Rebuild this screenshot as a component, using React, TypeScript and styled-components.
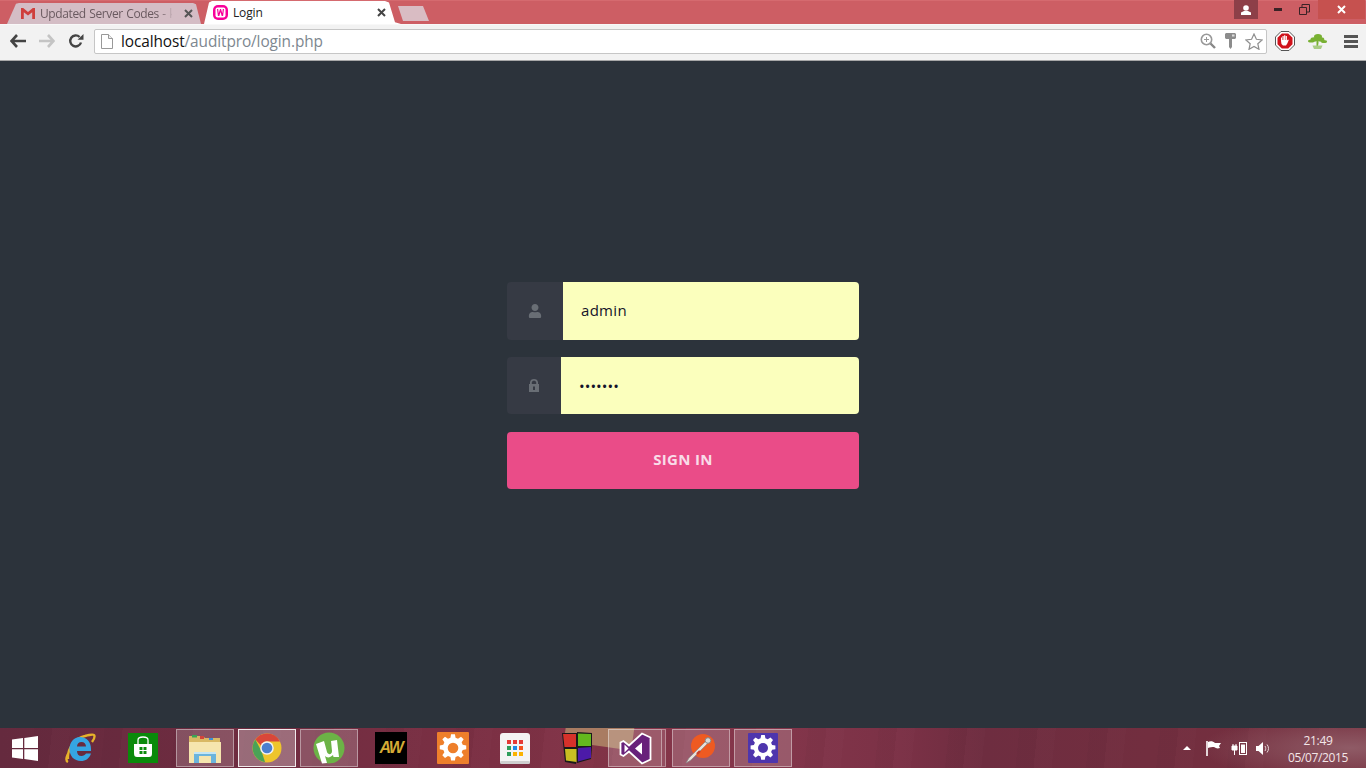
import React from "react";
import styled, { createGlobalStyle } from "styled-components";
import { FaUser } from "react-icons/fa";

const Global = createGlobalStyle`
  html, body { margin: 0; padding: 0; height: 100%; overflow: hidden; }
  body { font-family: "Open Sans", "Liberation Sans", sans-serif; background: #2c333b; }
  #root { height: 100%; }
`;

const Screen = styled.div`
  width: 1366px; height: 768px; display: flex; flex-direction: column; overflow: hidden;
`;

/* ---------- browser chrome ---------- */
const TabStrip = styled.div`
  height: 24px; flex: none; background: #cd5e64; display: flex; align-items: flex-end;
  padding-left: 7px; position: relative; box-sizing: border-box;
  box-shadow: inset 0 1px 0 #d56a6f;
`;
const Tab = styled.div<{ $active?: boolean }>`
  height: ${p => (p.$active ? 23 : 21)}px;
  width: ${p => (p.$active ? 201 : 194)}px;
  margin-left: ${p => (p.$active ? -1 : 0)}px;
  flex: none; box-sizing: border-box;
  padding: 0 ${p => (p.$active ? 15 : 8)}px 0 ${p => (p.$active ? 13 : 14)}px;
  background: ${p => (p.$active ? "#ffffff" : "#d4bdc5")};
  clip-path: ${p => p.$active
    ? "polygon(0 100%, 4px 100%, 9px 6%, 12px 0, 185px 0, 189px 6%, 195px 92%, 201px 100%)"
    : "polygon(0 100%, 9px 4%, 12px 0, 186px 0, 189px 6%, 194px 100%)"};
  display: flex; align-items: center; gap: 5px; font-size: 12px;
  letter-spacing: ${p => (p.$active ? -0.15 : -0.38)}px;
  word-spacing: ${p => (p.$active ? 0 : 0.7)}px;
  color: ${p => (p.$active ? "#222" : "#6a5a60")};
`;
const TabTitle = styled.span<{ $fade?: boolean }>`
  flex: 1; overflow: hidden; white-space: nowrap;
  ${p => p.$fade ? "mask-image: linear-gradient(90deg, #000 90%, rgba(0,0,0,.15));" : ""}
`;
const TabClose = styled.span`
  display: flex; flex: none; margin-left: 7px;
`;
const NewTab = styled.div`
  width: 32px; height: 15px; margin: 0 0 3px -3px; flex: none; background: #d9bcc3;
  clip-path: polygon(0 0, 25px 0, 31px 100%, 5px 100%);
`;
const WindowControls = styled.div`
  position: absolute; top: 0; right: 1px; height: 19px; display: flex;
`;
const Ctl = styled.div<{ $w: number; $bg?: string; $skip?: number }>`
  width: ${p => p.$w}px; height: 19px; background: ${p => p.$bg || "transparent"};
  margin-left: ${p => p.$skip || 0}px;
  display: flex; align-items: center; justify-content: center;
`;

const Toolbar = styled.div`
  height: 37px; flex: none; display: flex; align-items: center; box-sizing: border-box;
  padding: 0 0 2px 3px; background: #f2f2f2; border-bottom: 1px solid #a8a8a8;
  box-shadow: inset 0 1px 0 #f8f8f8;
`;
const NavSlot = styled.div`
  width: 29px; height: 24px; display: flex; align-items: center; justify-content: center; flex: none;
`;
const UrlBox = styled.div`
  flex: 1; height: 25px; margin-left: 4px; box-sizing: border-box; background: #fff;
  border: 1px solid #c6c6c6; border-radius: 2px; display: flex; align-items: center;
  padding: 0 3px 0 6px;
`;
const Url = styled.div`
  flex: 1; margin-left: 8px; font-size: 15.4px; color: #7d8790; letter-spacing: -0.1px; white-space: nowrap;
`;
const Host = styled.span` color: #111; `;
const UrlIcons = styled.div` display: flex; align-items: center; gap: 9px; `;
const Extensions = styled.div`
  width: 99px; flex: none; display: flex; align-items: center; padding-left: 8px; box-sizing: border-box;
`;
const ExtSlot = styled.div<{ $w: number }>`
  width: ${p => p.$w}px; flex: none; display: flex; align-items: center; justify-content: center;
`;

/* ---------- page ---------- */
const Page = styled.main`
  flex: 1; background: #2c333b; display: flex; flex-direction: column; align-items: center;
  padding-top: 221px; box-sizing: border-box;
`;
const Form = styled.form`
  width: 352px; display: flex; flex-direction: column;
`;
const Field = styled.div<{ $h: number; $gap: number }>`
  height: ${p => p.$h}px; margin-bottom: ${p => p.$gap}px; display: flex; border-radius: 4px; overflow: hidden;
`;
const Addon = styled.div<{ $w: number }>`
  width: ${p => p.$w}px; flex: none; background: #363a44; color: #696e75; font-size: 14px;
  display: flex; align-items: center; justify-content: center;
`;
const Input = styled.input<{ $spacing: number; $lift?: number }>`
  flex: 1; min-width: 0; border: 0; outline: 0; background: #fbffbd;
  padding: 0 18px ${p => p.$lift || 0}px; margin: 0;
  font-family: "Open Sans", sans-serif; font-size: 15px; letter-spacing: ${p => p.$spacing}px; color: #14142a;
`;
const Submit = styled.button`
  height: 57px; border: 0; border-radius: 4px; background: #ea4c88; color: #f9dce8;
  font-family: "Open Sans", sans-serif; font-weight: 700; font-size: 15px; letter-spacing: 0.3px; padding: 0 0 4px;
`;

/* ---------- taskbar ---------- */
const Taskbar = styled.footer`
  height: 40px; flex: none; position: relative; display: flex; align-items: center; overflow: hidden;
  background:
    radial-gradient(150px 34px at 1350px 20px, #8f5b66 0%, rgba(143,91,102,0) 100%),
    repeating-linear-gradient(96deg, rgba(255,255,255,0) 0 34px, rgba(0,0,0,.025) 34px 52px, rgba(255,255,255,.012) 52px 70px),
    linear-gradient(90deg, #652a3e 0%, #6f2c40 18%, #7c3044 36%, #87364a 48%, #82354a 58%, #7b3146 66%, #6e2d40 72%, #722e3f 84%, #76303f 100%);
  &::before {
    content: ""; position: absolute; left: 566px; top: -18px; width: 68px; height: 36px;
    background: #a97c62; transform: rotate(8deg);
  }
`;
const StartSlot = styled.div`
  width: 50px; height: 40px; flex: none; display: flex; align-items: center; justify-content: center;
`;
const Slot = styled.div<{ $state?: "open" | "active" | "stack"; $first?: boolean }>`
  width: 58px; height: 38px; margin: 0 2px; flex: none; box-sizing: border-box;
  display: flex; align-items: center; justify-content: center; position: relative;
  ${p => p.$first && "margin-left: 1px; margin-right: 3px;"}
  ${p => p.$state === "open" && "background: rgba(255,255,255,.18); border: 1px solid rgba(255,255,255,.4);"}
  ${p => p.$state === "active" && "background: rgba(255,255,255,.3); border: 1px solid rgba(255,255,255,.85);"}
  ${p => p.$state === "stack" && "background: rgba(255,255,255,.18); border: 1px solid rgba(255,255,255,.4); width: 54px; margin: 0 8px 0 0; &::after { content: ''; position: absolute; left: 53px; top: -1px; bottom: -1px; width: 4px; box-sizing: border-box; background: rgba(255,255,255,.12); border: 1px solid rgba(255,255,255,.35); border-left: 0; }"}
`;
const Tray = styled.div`
  position: absolute; right: 0; top: 0; height: 40px; display: flex; align-items: center; color: #fff;
`;
const TrayIcons = styled.div`
  display: flex; align-items: center; gap: 9px;
`;
const TrayArrow = styled.span`
  display: flex; margin-right: 6px;
`;
const Clock = styled.div`
  width: 96px; text-align: center; font-size: 12px; line-height: 17px; color: #f3e6e8;
  letter-spacing: -0.35px; padding-top: 2px; box-sizing: border-box;
`;

/* ---------- icons ---------- */
const Gmail = () => (
  <svg width="14" height="11" viewBox="0 0 14 11">
    <path d="M0 0h2.200L7 4 11.800 0H14v11h-2.800V4.200L7 7.600 2.800 4.200V11H0z" fill="#cf3f3c" />
  </svg>
);
const Wamp = () => (
  <svg width="15" height="15" viewBox="0 0 15 15">
    <rect width="15" height="15" rx="5" fill="#f8009a" />
    <rect x="2.500" y="2.500" width="10" height="10" rx="2" fill="#fff" />
    <path d="M4 4l.9 7h1.400L7.500 7l1.200 4h1.400L11 4H9.800l-.5 4.200L8 4H7L5.700 8.200 5.200 4z" fill="#f8009a" />
  </svg>
);
const Close = ({ c = "#555" }: { c?: string }) => (
  <svg width="9" height="9" viewBox="0 0 9 9">
    <path d="M1 1l7 7M8 1L1 8" stroke={c} strokeWidth="2" />
  </svg>
);
const Back = () => (
  <svg width="16" height="14" viewBox="0 0 16 14">
    <path d="M7 1L1.500 7 7 13M2 7h14" fill="none" stroke="#444" strokeWidth="2.600" />
  </svg>
);
const Forward = () => (
  <svg width="16" height="14" viewBox="0 0 16 14">
    <path d="M9 1l5.500 6L9 13M14 7H0" fill="none" stroke="#c4c4c4" strokeWidth="2.600" />
  </svg>
);
const Reload = () => (
  <svg width="16" height="16" viewBox="0 0 16 16">
    <path d="M13 9.500A5.500 5.500 0 1 1 11.600 4" fill="none" stroke="#444" strokeWidth="2.400" />
    <path d="M9.500 6.800H15.500V1z" fill="#444" />
  </svg>
);
const PageIcon = () => (
  <svg width="12" height="15" viewBox="0 0 12 15">
    <path d="M.5.500h7l4 4v10H.500z" fill="#fff" stroke="#999" />
    <path d="M7.500.500v4h4" fill="#eee" stroke="#999" />
  </svg>
);
const ZoomIcon = () => (
  <svg width="16" height="16" viewBox="0 0 16 16">
    <circle cx="6.500" cy="6.500" r="5.200" fill="none" stroke="#999" strokeWidth="1.600" />
    <path d="M10.500 10.500L15 15" stroke="#888" strokeWidth="2.400" />
    <path d="M4 6.500h5M6.500 4v5" stroke="#999" />
  </svg>
);
const Key = () => (
  <svg width="11" height="16" viewBox="0 0 11 16">
    <path d="M1 0h9l1 1v4l-1 1H7v8l-1.500 2L4 14V6H1L0 5V1z" fill="#8c8c8c" />
    <rect x="7" y="1.500" width="2.500" height="2" fill="#ddd" />
  </svg>
);
const Star = () => (
  <svg width="18" height="17" viewBox="0 0 18 17">
    <path d="M9 1l2.400 5.300 5.700.6-4.300 3.800 1.200 5.600L9 13.400 4 16.300l1.200-5.600L.9 6.900l5.700-.6z" fill="#fff" stroke="#8f8f8f" strokeWidth="1.200" />
  </svg>
);
const Stop = () => (
  <svg width="20" height="20" viewBox="0 0 20 20">
    <path d="M6 .5h8L19.500 6v8L14 19.500H6L.5 14V6z" fill="#fff" stroke="#555" />
    <path d="M6.800 2.500h6.400L17.500 6.800v6.400l-4.300 4.300H6.800l-4.300-4.300V6.800z" fill="#d0121b" />
    <path d="M6 10V6.500h1V9h.5V5h1.200v4h.4V4.300h1.200V9h.4V5h1.200v4.500l1.100-1 .8.600-1.500 3.500-1.300 2H8L6.500 13z" fill="#fff" />
  </svg>
);
const Bonsai = () => (
  <svg width="19" height="15" viewBox="0 0 19 15">
    <ellipse cx="10" cy="2.800" rx="4" ry="2.800" fill="#78b032" />
    <ellipse cx="6" cy="5.500" rx="3.500" ry="2.200" fill="#78b032" />
    <ellipse cx="3.200" cy="7" rx="3.200" ry="1.600" fill="#78b032" />
    <ellipse cx="13" cy="5.500" rx="3.300" ry="2.200" fill="#78b032" />
    <ellipse cx="16" cy="7.600" rx="3" ry="1.500" fill="#78b032" />
    <path d="M8.500 5h2v4l-.5 3H8.500z" fill="#78b032" />
    <path d="M4.500 11.500h10L13 15H6z" fill="#a9cc84" />
  </svg>
);
const Burger = () => (
  <svg width="14" height="13" viewBox="0 0 14 13">
    <path d="M0 0h14v3H0zM0 5h14v3H0zM0 10h14v3H0z" fill="#555" />
  </svg>
);
const Avatar = () => (
  <svg width="12" height="10" viewBox="0 0 12 10">
    <circle cx="6" cy="3" r="2.800" fill="#fff" />
    <path d="M1 7.500l3-1.500h4l3 1.500V10H1z" fill="#fff" />
  </svg>
);
const Min = () => <svg width="9" height="3" viewBox="0 0 9 3"><rect width="8" height="3" fill="#3a2226" /></svg>;
const Restore = () => (
  <svg width="11" height="11" viewBox="0 0 11 11">
    <path d="M.5 3.500h7v7h-7zM3 3V.500h7.500V8H8" fill="none" stroke="#3a2226" />
  </svg>
);
const Lock = () => (
  <svg width="10" height="13" viewBox="0 0 10 13">
    <path d="M0 5h1V3.500C1 1 3 0 5 0s4 1 4 3.500V5h1v8H0zM2.800 5h4.400V3.500C7.200 2.300 6 1.800 5 1.800S2.800 2.300 2.800 3.500z" fill="#696e75" fillRule="evenodd" />
    <rect x="4" y="7.500" width="2" height="3.500" fill="#363a44" />
  </svg>
);
const Windows = () => (
  <svg width="26" height="25" viewBox="0 0 26 25">
    <path d="M0 3.600l11-1.500v9.900H0zM12.300 1.900L26 0v12H12.300zM0 13.200h11v9.700L0 21.400zM12.300 13.200H26V25l-13.700-1.900z" fill="#fff" />
  </svg>
);
const IE = () => (
  <svg width="32" height="32" viewBox="0 0 32 32">
    <path d="M4 27C3 17 11 6 21 4c5-1.500 8-2 9-1 1.500 2-.5 5-2 7" fill="none" stroke="#e6b22a" strokeWidth="2.400" />
    <path d="M4 30c-2-1-2-4 0-8" fill="none" stroke="#e6b22a" strokeWidth="2.400" />
    <path d="M16 5c7 0 11 5 11 12v2H13c0 3 1.500 5 4.500 5 2 0 3.500-1 4.500-2.500h5C25.500 26.500 21.500 29 17 29 10 29 5.500 24 5.500 17S10 5 16 5zm-3 9.500h9c0-2.500-1.800-4.500-4.500-4.500S13 12 13 14.500z" fill="#35a5e3" />
  </svg>
);
const Store = () => (
  <svg width="30" height="30" viewBox="0 0 30 30">
    <rect width="30" height="30" fill="#0a8a0a" />
    <path d="M6 11h18v9c0 3-1 4-3 4H9c-2 0-3-1-3-4z" fill="#fff" />
    <path d="M10 11V7c0-4 10-4 10 0v4" fill="none" stroke="#fff" strokeWidth="1.300" />
    <path d="M11.500 14h3v3h-3zM15.500 14h3v3h-3zM11.500 18h3v3h-3zM15.500 18h3v3h-3z" fill="#0a8a0a" />
  </svg>
);
const Explorer = () => (
  <svg width="32" height="29" viewBox="0 0 32 29">
    <path d="M0 2h14l2 2h15v23H0z" fill="#d9b864" />
    <rect x="3" y="1" width="5" height="2.500" fill="#3aa655" />
    <rect x="11" y="2" width="4" height="3" fill="#d4453a" />
    <rect x="20" y="4" width="4" height="2" fill="#3a8fd4" />
    <path d="M0 8h32v21H0z" fill="#f6e5ae" />
    <path d="M5 29V18h22v11h-5v-7H10v7z" fill="#6cb4dc" />
    <path d="M5 18h22v2H5z" fill="#c4e6f5" />
  </svg>
);
const Chrome = () => (
  <svg width="30" height="30" viewBox="0 0 30 30">
    <circle cx="15" cy="15" r="14.500" fill="#eec52c" />
    <path d="M15 .5A14.500 14.500 0 0 1 28 8.500H15a6.500 6.500 0 0 0-6 4L3.300 6.500A14.500 14.500 0 0 1 15 .5z" fill="#d9473a" />
    <path d="M3.300 6.500L9.600 18.500l3.500 10.800A14.500 14.500 0 0 1 3.300 6.500z" fill="#4aa257" />
    <circle cx="15" cy="15" r="6.800" fill="#f2f2f2" />
    <circle cx="15" cy="15" r="5.300" fill="#4a7fd0" />
  </svg>
);
const UTorrent = () => (
  <svg width="32" height="32" viewBox="0 0 32 32">
    <circle cx="16" cy="16" r="15.500" fill="#6cb346" />
    <path d="M3 12l8-3 3 11c1 3 5 3 5-1l-1-10 6-1 2 17h-5.500l-.5-2c-3 3-6 3-8 1l2 7-5 .5z" fill="#fff" />
  </svg>
);
const AWIcon = () => (
  <svg width="32" height="32" viewBox="0 0 32 32">
    <rect width="32" height="32" fill="#000" />
    <text x="16" y="21" textAnchor="middle" fontFamily="Liberation Sans, sans-serif" fontWeight="700" fontStyle="italic" fontSize="16" letterSpacing="-1.500" fill="#d4ab35">AW</text>
  </svg>
);
const gearPath = "M13.200 2h3.600l.6 3.300 2.300 1 2.800-1.900 2.500 2.500-1.900 2.800 1 2.300 3.300.6v3.600l-3.300.6-1 2.300 1.900 2.800-2.500 2.500-2.800-1.900-2.300 1-.6 3.300h-3.600l-.6-3.300-2.300-1-2.800 1.900-2.500-2.500 1.900-2.800-1-2.300-3.300-.6v-3.600l3.300-.6 1-2.300-1.900-2.800 2.500-2.500 2.800 1.900 2.300-1z";
const Gear = ({ bg, size }: { bg: string; size: number }) => (
  <svg width={size} height={size} viewBox="0 0 30 30">
    <rect width="30" height="30" rx="1" fill={bg} />
    <path d={gearPath} fill="#fff" />
    <circle cx="15" cy="15" r="5" fill={bg} />
  </svg>
);
const Apps = () => {
  const c = ["#e53935", "#e53935", "#e53935", "#2e9e5b", "#1e88e5", "#f4511e", "#2e9e5b", "#fbb300", "#fbb300"];
  return (
    <svg width="30" height="31" viewBox="0 0 30 31">
      <rect width="30" height="31" rx="3" fill="#f4f4f4" />
      <rect y="28" width="30" height="3" rx="1.500" fill="#cfcfcf" />
      {c.map((f, i) => (
        <rect key={i} x={7 + (i % 3) * 6} y={7 + Math.floor(i / 3) * 6} width="4" height="4" fill={f} />
      ))}
    </svg>
  );
};
const Cube = () => (
  <svg width="31" height="32" viewBox="0 0 31 32">
    <path d="M0 1l15 0 1 15-2 16-11-2z" fill="#1a1a1a" />
    <path d="M15 0l15 1v14l-1 12-14 4z" fill="#1a1a1a" />
    <path d="M1 2h13v13H2.500z" fill="#d6312a" />
    <path d="M16 1.500l13 .5v12H16z" fill="#64b81e" />
    <path d="M3 17h11.500v13l-10.500-1.500z" fill="#c9be22" />
    <path d="M16 16l13-1v11l-13 3.500z" fill="#4c1aa8" />
  </svg>
);
const VS = () => (
  <svg width="33" height="33" viewBox="0 0 33 33">
    <path d="M23 1.500l8.500 4v22l-8.500 4-13-12-5.500 4.500-3-1.500V10.500l3-1.500 5.500 4.500z" fill="#68217a" stroke="#fff" strokeWidth="1.800" />
    <path d="M23 10.500l-7 6 7 6zM5.500 12.500v8l4-4z" fill="#fff" />
  </svg>
);
const Pen = () => (
  <svg width="32" height="32" viewBox="0 0 32 32">
    <circle cx="18" cy="14" r="12" fill="#ee5a22" />
    <path d="M1 31l5-3L24 10l-2-2L4 26z" fill="#e8e0da" stroke="#8a8a8a" strokeWidth=".7" />
    <path d="M12 22l3-3" stroke="#c8402a" strokeWidth="2.400" />
    <circle cx="23" cy="8.500" r="2.800" fill="#d8d8d8" stroke="#888" />
  </svg>
);
const TrayUp = () => <svg width="8" height="4" viewBox="0 0 8 4"><path d="M4 0l4 4H0z" fill="#fff" /></svg>;
const Flag = () => (
  <svg width="16" height="15" viewBox="0 0 16 15">
    <path d="M1 0v15" stroke="#fff" strokeWidth="1.600" />
    <path d="M2 1c2-1 5-1 7 1l6 0-2 3 1 2c-3 1-4 0-6-1-2 0-4 0-6 1z" fill="#fff" />
  </svg>
);
const Battery = () => (
  <svg width="16" height="14" viewBox="0 0 16 14">
    <path d="M1 5h5v4H1zM2 3v2M5 3v2M3.500 9v5" stroke="#fff" fill="#fff" />
    <rect x="8.500" y="1.500" width="7" height="12" fill="none" stroke="#fff" />
    <rect x="10" y="3.500" width="4" height="8.500" fill="#fff" />
  </svg>
);
const Speaker = () => (
  <svg width="14" height="13" viewBox="0 0 14 13">
    <path d="M0 4h2.500L7 0v13L2.500 9H0z" fill="#fff" />
    <path d="M9 4c1 1.500 1 3.500 0 5M11 2.500c2 2.500 2 5.500 0 8" fill="none" stroke="#e8d8da" />
  </svg>
);

export default function App() {
  return (
    <Screen>
      <Global />
      <TabStrip>
        <Tab>
          <Gmail />
          <TabTitle $fade>Updated Server Codes - k</TabTitle>
          <TabClose><Close /></TabClose>
        </Tab>
        <Tab $active>
          <Wamp />
          <TabTitle>Login</TabTitle>
          <TabClose><Close c="#444" /></TabClose>
        </Tab>
        <NewTab />
        <WindowControls>
          <Ctl $w={24} $bg="#8d3f48"><Avatar /></Ctl>
          <Ctl $w={24} $skip={8}><Min /></Ctl>
          <Ctl $w={28}><Restore /></Ctl>
          <Ctl $w={47} $bg="#c6514f"><Close c="#fff" /></Ctl>
        </WindowControls>
      </TabStrip>
      <Toolbar>
        <NavSlot><Back /></NavSlot>
        <NavSlot><Forward /></NavSlot>
        <NavSlot><Reload /></NavSlot>
        <UrlBox>
          <PageIcon />
          <Url><Host>localhost</Host>/auditpro/login.php</Url>
          <UrlIcons>
            <ZoomIcon />
            <Key />
            <Star />
          </UrlIcons>
        </UrlBox>
        <Extensions>
          <ExtSlot $w={20}><Stop /></ExtSlot>
          <ExtSlot $w={44}><Bonsai /></ExtSlot>
          <ExtSlot $w={24}><Burger /></ExtSlot>
        </Extensions>
      </Toolbar>
      <Page>
        <Form onSubmit={e => e.preventDefault()}>
          <Field $h={58} $gap={17}>
            <Addon $w={56}><FaUser /></Addon>
            <Input type="text" defaultValue="admin" readOnly $spacing={0.3} $lift={2} />
          </Field>
          <Field $h={57} $gap={18}>
            <Addon $w={54}><Lock /></Addon>
            <Input type="password" defaultValue="1234567" readOnly $spacing={0.05} />
          </Field>
          <Submit type="submit">SIGN IN</Submit>
        </Form>
      </Page>
      <Taskbar>
        <StartSlot><Windows /></StartSlot>
        <Slot $first><IE /></Slot>
        <Slot><Store /></Slot>
        <Slot $state="open"><Explorer /></Slot>
        <Slot $state="active"><Chrome /></Slot>
        <Slot $state="open"><UTorrent /></Slot>
        <Slot><AWIcon /></Slot>
        <Slot><Gear bg="#ee7f2b" size={32} /></Slot>
        <Slot><Apps /></Slot>
        <Slot><Cube /></Slot>
        <Slot $state="stack"><VS /></Slot>
        <Slot $state="open"><Pen /></Slot>
        <Slot $state="open"><Gear bg="#4e35ad" size={30} /></Slot>
        <Tray>
          <TrayIcons>
            <TrayArrow><TrayUp /></TrayArrow>
            <Flag />
            <Battery />
            <Speaker />
          </TrayIcons>
          <Clock>21:49<br />05/07/2015</Clock>
        </Tray>
      </Taskbar>
    </Screen>
  );
}
